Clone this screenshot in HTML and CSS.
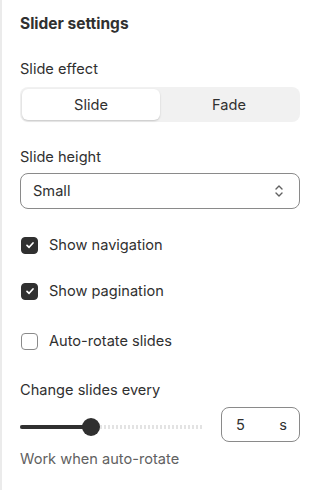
FILE: index.html
```html
<!DOCTYPE html>
<html>
<head>
<meta charset="utf-8">
<link rel="stylesheet" href="styles.css">
</head>
<body>
<div class="panel">
  <h2 class="title">Slider settings</h2>

  <div class="field">
    <div class="label">Slide effect</div>
    <div class="segmented">
      <div class="seg seg-active">Slide</div>
      <div class="seg">Fade</div>
    </div>
  </div>

  <div class="field field-height">
    <div class="label">Slide height</div>
    <div class="select">
      <span>Small</span>
      <svg class="chev" width="12" height="16" viewBox="0 0 12 16"><path d="M3 6 L6 3 L9 6 M3 10 L6 13 L9 10" fill="none" stroke="#616161" stroke-width="1.4" stroke-linecap="round" stroke-linejoin="round"/></svg>
    </div>
  </div>

  <label class="check check-nav">
    <span class="box box-on"><svg width="12" height="12" viewBox="0 0 12 12"><path d="M3 6.3 L5.1 8.3 L9 4" fill="none" stroke="#fff" stroke-width="1.7" stroke-linecap="round" stroke-linejoin="round"/></svg></span>
    <span>Show navigation</span>
  </label>
  <label class="check check-pag">
    <span class="box box-on"><svg width="12" height="12" viewBox="0 0 12 12"><path d="M3 6.3 L5.1 8.3 L9 4" fill="none" stroke="#fff" stroke-width="1.7" stroke-linecap="round" stroke-linejoin="round"/></svg></span>
    <span>Show pagination</span>
  </label>
  <label class="check check-auto">
    <span class="box"></span>
    <span>Auto-rotate slides</span>
  </label>

  <div class="field field-range">
    <div class="label">Change slides every</div>
    <div class="range-row">
      <div class="range">
        <div class="track"></div>
        <div class="fill"></div>
        <div class="thumb"></div>
      </div>
      <div class="num"><span>5</span><span>s</span></div>
    </div>
    <div class="help">Work when auto-rotate</div>
  </div>
</div>
</body>
</html>
```

FILE: styles.css
```css
* { box-sizing: border-box; }
html, body { margin: 0; padding: 0; background: #fff; }
body {
  font-family: Inter, "Noto Sans", sans-serif;
  font-size: 14.6px;
  color: #303030;
  width: 318px;
  height: 490px;
  overflow: hidden;
}
.panel {
  border-left: 2px solid #ebebeb;
  height: 490px;
  padding: 14px 18px 0 18px;
}
.title {
  margin: 0;
  font-size: 15.5px;
  font-weight: 650;
  line-height: 20px;
}
.field { margin-top: 25px; }
.label { line-height: 20px; }
.segmented {
  margin-top: 8px;
  background: #f1f1f1;
  border-radius: 8px;
  padding: 2px;
  display: flex;
  height: 35px;
}
.seg {
  flex: 1;
  display: flex;
  align-items: center;
  justify-content: center;
  border-radius: 6px;
}
.seg-active {
  background: #fff;
  box-shadow: 0 1px 2px rgba(0,0,0,0.18);
}
.field-height { margin-top: 25px; }
.select {
  margin-top: 6px;
  height: 36px;
  border: 1px solid #8a8a8a;
  border-radius: 8px;
  display: flex;
  align-items: center;
  justify-content: space-between;
  padding: 0 14px 0 12px;
}
.check {
  display: flex;
  align-items: center;
  gap: 11px;
  height: 18px;
}
.check-nav { margin-top: 27px; }
.check-pag { margin-top: 28px; }
.check-auto { margin-top: 32px; }
.box {
  width: 17px;
  height: 17px;
  border: 1px solid #8a8a8a;
  border-radius: 4px;
  display: flex;
  align-items: center;
  justify-content: center;
  margin-left: 1px;
}
.box-on { background: #303030; border-color: #303030; }
.field-range { margin-top: 30px; }
.range-row {
  display: flex;
  align-items: flex-start;
  justify-content: space-between;
  margin-top: 7px;
}
.range {
  position: relative;
  width: 184px;
  height: 20px;
  margin-top: 10px;
}
.track {
  position: absolute;
  left: 0; right: 0; top: 8px;
  height: 4px;
  background: repeating-linear-gradient(90deg, #e3e3e3 0 2px, #fff 2px 4px);
}
.fill {
  position: absolute;
  left: 0; top: 8px;
  width: 72px;
  height: 4px;
  border-radius: 2px;
  background: #303030;
}
.thumb {
  position: absolute;
  left: 62px; top: 1px;
  width: 18px; height: 18px;
  border-radius: 50%;
  background: #303030;
}
.num {
  width: 79px;
  height: 35px;
  border: 1px solid #8a8a8a;
  border-radius: 8px;
  display: flex;
  align-items: center;
  justify-content: space-between;
  padding: 0 12px 0 14px;
}
.help {
  margin-top: 7px;
  color: #616161;
  line-height: 20px;
}
```
